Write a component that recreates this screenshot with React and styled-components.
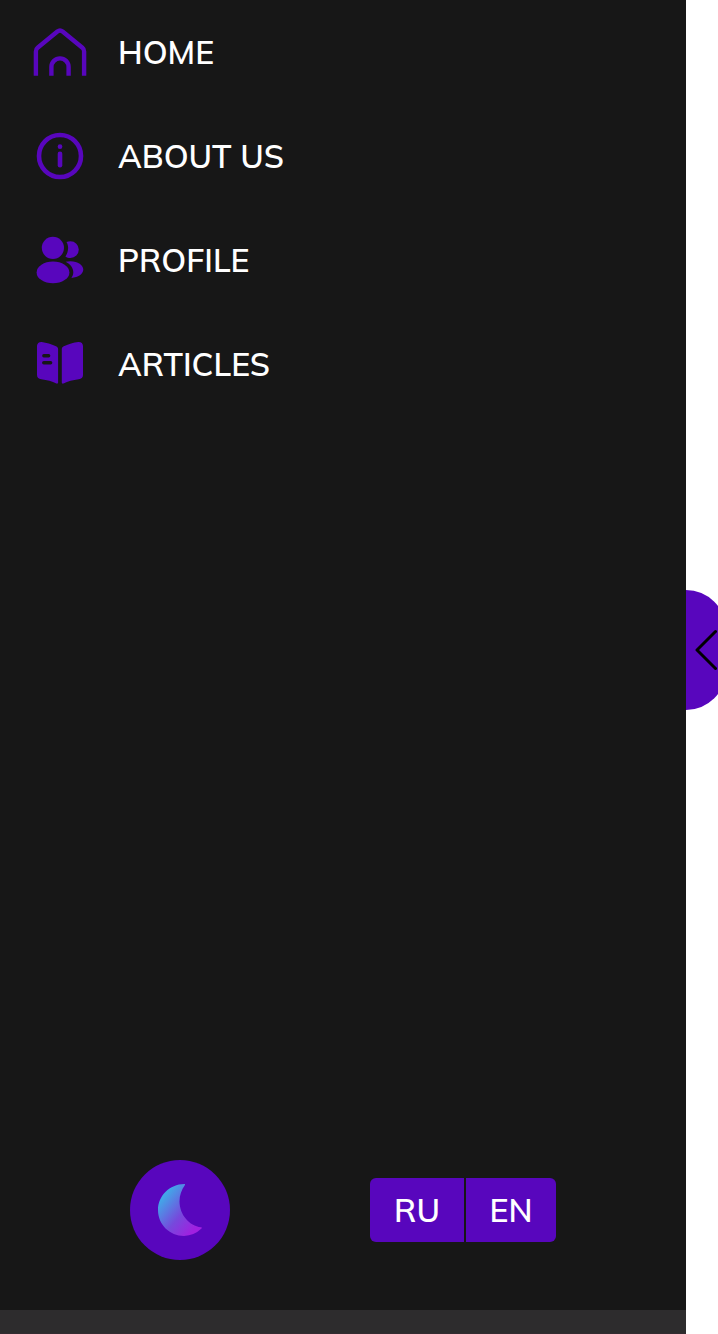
import React from 'react';
import styled, { createGlobalStyle } from 'styled-components';

const purple = '#5806bd';
const dark = '#171717';

const GlobalStyle = createGlobalStyle`
  * { box-sizing: border-box; }
  body { margin: 0; background: #fff; overflow: hidden; font-family: Mulish, "Nunito Sans", Nunito, Lato, sans-serif; }
  button { border: 0; padding: 0; font: inherit; cursor: pointer; }
`;

const Page = styled.div`
  display: flex;
  width: 100%;
  height: 100vh;
  overflow: hidden;
`;

const Column = styled.div`
  flex: 0 0 686px;
  display: flex;
  flex-direction: column;
`;

const Sidebar = styled.aside`
  flex: 1;
  display: flex;
  flex-direction: column;
  justify-content: space-between;
  padding: 24px 0 50px;
  background: ${dark};
`;

const BottomStrip = styled.div`
  height: 24px;
  background: #2d2c2d;
  border-bottom: 1px solid #332b30;
`;

const Menu = styled.nav`
  display: flex;
  flex-direction: column;
  gap: 48px;
  padding-left: 32px;
`;

const MenuItem = styled.a`
  display: flex;
  align-items: center;
  gap: 30px;
  height: 56px;
  color: #fff;
  text-decoration: none;
`;

const Icon = styled.svg`
  flex: none;
  display: block;
  width: 56px;
  height: 56px;
  color: ${purple};
`;

const Label = styled.span`
  font-size: 32px;
  font-weight: 600;
  line-height: 44px;
  color: #fff;
  white-space: nowrap;
  letter-spacing: ${(p) => p.$spacing || 0}px;
`;

const Footer = styled.footer`
  display: flex;
  align-items: center;
  justify-content: center;
  gap: 140px;
`;

const ThemeButton = styled.button`
  display: flex;
  align-items: center;
  justify-content: center;
  width: 100px;
  height: 100px;
  border-radius: 50%;
  background: ${purple};
`;

const Languages = styled.div`
  display: flex;
  gap: 2px;
  height: 64px;
  border-radius: 6px;
  overflow: hidden;
`;

const LanguageButton = styled.button`
  width: ${(p) => p.$width}px;
  background: ${purple};
`;

const CollapseButton = styled.button`
  flex: none;
  align-self: flex-start;
  display: flex;
  align-items: center;
  width: 40px;
  height: 120px;
  margin-top: 590px;
  padding-left: 8px;
  border-radius: 0 40px 40px 0;
  background: ${purple};
`;

const HomeIcon = () => (
  <Icon viewBox="0 0 56 56" fill="none" stroke="currentColor" strokeWidth="4.4">
    <path d="M3.9 51.7V27.4a4.5 4.5 0 0 1 1.7-3.6L25.4 7.5a4.1 4.1 0 0 1 5.2 0l19.8 16.3a4.5 4.5 0 0 1 1.7 3.6v24.3" />
    <path d="M19.4 51.7V43a8.6 8.6 0 0 1 17.2 0v8.7" />
  </Icon>
);

const InfoIcon = () => (
  <Icon viewBox="0 0 56 56">
    <circle cx="28" cy="28" r="21" fill="none" stroke="currentColor" strokeWidth="4.6" />
    <circle cx="28" cy="18.7" r="2.35" fill="currentColor" />
    <path d="M28 25.7v11.6" fill="none" stroke="currentColor" strokeWidth="4.6" strokeLinecap="round" />
  </Icon>
);

const ProfileIcon = () => (
  <Icon viewBox="0 0 56 56" fill="currentColor">
    <circle cx="20.9" cy="15.8" r="11.1" />
    <ellipse cx="21" cy="40.4" rx="16.4" ry="10.9" />
    <path d="M34.5 10.1c1.2-.6 2.5-.9 3.9-.9a8.4 8.4 0 0 1 0 16.8c-1.9 0-3.6-.6-5-1.6 1.7-2.3 2.7-5.3 2.7-8.6 0-2-.6-4-1.6-5.7Z" />
    <path d="M33.6 29.8c1.5-.4 3.2-.6 5-.6 7.2 0 12.7 3.9 12.7 8.4 0 4.4-5 7.9-11.9 8.3 1.2-1.7 1.9-3.6 1.9-5.6 0-4.1-2.9-8.3-7.7-10.5Z" />
  </Icon>
);

const BookIcon = () => (
  <Icon viewBox="0 4 56 56" fill="currentColor">
    <path fillRule="evenodd" d="M5 14.1c0-2.7 2.1-4.3 4.8-4.1 4.5.6 9.8 2.2 13.6 4.1 1.7.8 2.7 1.4 2.7 2.8v33.6c0 .9-.8 1.4-1.7 1-4.5-2-9.2-3.7-15.1-4.3-2.6-.3-4.3-1.8-4.3-4.3Zm6.8 8a1.65 1.65 0 0 0 0 3.3h4.9a1.65 1.65 0 0 0 0-3.3Zm0 6.9a1.75 1.75 0 0 0 0 3.5h6.8a1.75 1.75 0 0 0 0-3.5Z" />
    <path d="M51 14.1c0-2.7-2-4.3-4.7-4.1-4.6.5-10 2.1-13.9 4.1-1.7.8-2.6 1.4-2.6 2.8v33.6c0 .9.8 1.4 1.7 1 4.5-2 9.3-3.7 15.2-4.3 2.6-.3 4.3-1.8 4.3-4.3Z" />
  </Icon>
);

const MoonIcon = () => (
  <svg width="46" height="54" viewBox="0 0 46 54">
    <defs>
      <linearGradient id="moon" gradientUnits="userSpaceOnUse" x1="5" y1="16" x2="39" y2="44">
        <stop offset="0" stopColor="#43a5e8" />
        <stop offset="0.55" stopColor="#7649dc" />
        <stop offset="1" stopColor="#a020e0" />
      </linearGradient>
    </defs>
    <path d="M27.2 1.1c.9-.1 1.2.3.6 1.1-3.2 4.4-5.3 10-5.3 16C22.5 31.9 32.4 42.8 44 44.3c1 .1 1.2.7.5 1.3A26 26 0 0 1 27 53C12.6 53 1 41.4 1 27 1 13 12.7 1.3 27.2 1.1Z" fill="url(#moon)" />
  </svg>
);

const items = [
  { label: 'HOME', icon: HomeIcon, spacing: 0 },
  { label: 'ABOUT US', icon: InfoIcon, spacing: 0 },
  { label: 'PROFILE', icon: ProfileIcon, spacing: 0 },
  { label: 'ARTICLES', icon: BookIcon, spacing: 0 },
];

export default function App() {
  return (
    <>
      <GlobalStyle />
      <Page>
        <Column>
          <Sidebar>
            <Menu>
              {items.map(({ label, icon: Glyph, spacing }) => (
                <MenuItem key={label} href="#">
                  <Glyph />
                  <Label $spacing={spacing}>{label}</Label>
                </MenuItem>
              ))}
            </Menu>
            <Footer>
              <ThemeButton aria-label="Theme"><MoonIcon /></ThemeButton>
              <Languages>
                <LanguageButton $width={94}><Label>RU</Label></LanguageButton>
                <LanguageButton $width={90}><Label>EN</Label></LanguageButton>
              </Languages>
            </Footer>
          </Sidebar>
          <BottomStrip />
        </Column>
        <CollapseButton aria-label="Collapse">
          <svg width="23" height="44" viewBox="0 0 23 44" fill="none" stroke="#000" strokeWidth="3" strokeLinecap="round" strokeLinejoin="round">
            <path d="M21.5 3.5 3 22l18.5 18.5" />
          </svg>
        </CollapseButton>
      </Page>
    </>
  );
}
